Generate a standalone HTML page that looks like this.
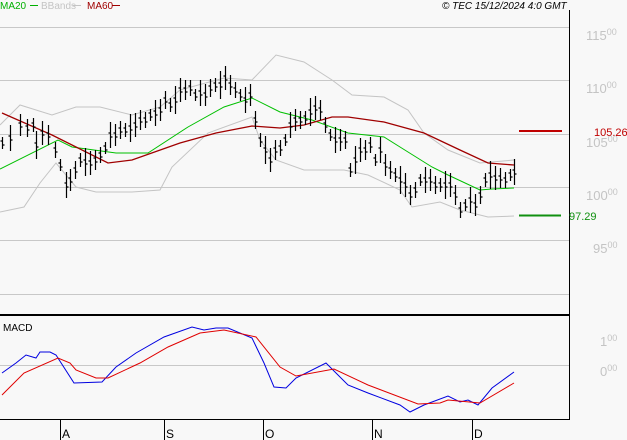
<!DOCTYPE html><html><head><style>
body{margin:0;background:#f8f8f8;width:627px;height:440px;overflow:hidden}
svg{display:block;font-family:"Liberation Sans",sans-serif}
.ax{fill:#c4c4c4;font-size:13px}
.ax tspan.s{font-size:9px}
</style></head><body>
<svg id="s" width="627" height="440" viewBox="0 0 627 440">
<rect width="627" height="440" fill="#f8f8f8"/>
<g stroke="#c8c8c8" stroke-width="1">
<line x1="0" y1="27.5" x2="569" y2="27.5"/><line x1="0" y1="80.5" x2="569" y2="80.5"/>
<line x1="0" y1="134.5" x2="569" y2="134.5"/><line x1="0" y1="187.5" x2="569" y2="187.5"/>
<line x1="0" y1="240.5" x2="569" y2="240.5"/><line x1="0" y1="294.5" x2="569" y2="294.5"/>
<line x1="0" y1="365.5" x2="569" y2="365.5"/>
</g>
<line x1="0" y1="315" x2="569" y2="315" stroke="#000" stroke-width="2"/>
<line x1="569.5" y1="10" x2="569.5" y2="420" stroke="#000"/>
<line x1="0" y1="419.5" x2="569" y2="419.5" stroke="#000"/>
<g stroke="#000"><line x1="60.5" y1="420" x2="60.5" y2="440"/><line x1="164.5" y1="420" x2="164.5" y2="440"/><line x1="263.5" y1="420" x2="263.5" y2="440"/><line x1="372.5" y1="420" x2="372.5" y2="440"/><line x1="472.5" y1="420" x2="472.5" y2="440"/></g>
<g font-size="12" fill="#000"><text x="62" y="438">A</text><text x="166" y="438">S</text><text x="265" y="438">O</text><text x="374" y="438">N</text><text x="474" y="438">D</text></g>
<g class="ax">
<text x="586" y="40">115<tspan class="s" dy="-5">00</tspan></text>
<text x="586" y="93">110<tspan class="s" dy="-5">00</tspan></text>
<text x="586" y="147">105<tspan class="s" dy="-5">00</tspan></text>
<text x="586" y="200">100<tspan class="s" dy="-5">00</tspan></text>
<text x="593" y="253">95<tspan class="s" dy="-5">00</tspan></text>
<text x="600" y="346">1<tspan class="s" dy="-5">00</tspan></text>
<text x="600" y="376">0<tspan class="s" dy="-5">00</tspan></text>
</g>
<line x1="519" y1="131" x2="562" y2="131" stroke="#c00000" stroke-width="2"/>
<text x="594" y="136" font-size="11" fill="#c00000">105.26</text>
<line x1="519" y1="215.5" x2="561" y2="215.5" stroke="#109010" stroke-width="2"/>
<text x="569" y="220" font-size="11" fill="#109010">97.29</text>
<g font-size="10">
<text x="0" y="9" fill="#00b000">MA20</text><line x1="30" y1="5.5" x2="38" y2="5.5" stroke="#00b000"/>
<text x="41" y="9" fill="#c4c4c4">BBands</text><line x1="73" y1="5.5" x2="81" y2="5.5" stroke="#c4c4c4"/>
<text x="87" y="9" fill="#a00000">MA60</text><line x1="112" y1="5.5" x2="120" y2="5.5" stroke="#a00000"/>
<text x="442" y="9" font-style="italic" fill="#000">© TEC 15/12/2024 4:0 GMT</text>
<text x="3" y="331" fill="#000">MACD</text>
</g>
<g fill="none">
<polyline stroke="#c4c4c4" points="0,125 20,105 52,115 76,107 100,107 132,115 160,107 180,90 224,78 252,80 276,55 304,62 332,80 352,95 384,97 408,110 424,133 448,150 480,163 514,160"/>
<polyline stroke="#c4c4c4" points="0,212 24,207 40,183 56,163 76,187 96,192 132,192 160,190 172,167 208,133 252,117 260,140 276,160 304,170 344,170 368,175 400,190 412,207 440,202 460,210 488,217 514,216"/>
<polyline stroke="#00c000" points="0,169 58,140 72,147 116,153 148,153 188,127 224,107 252,98 280,112 312,120 348,133 384,137 400,147 432,167 448,175 480,190 492,189 514,188"/>
<polyline stroke="#a00000" stroke-width="1.3" points="2,113 52,135 108,163 132,160 180,143 216,133 252,126 280,128 304,125 332,117 348,117 384,122 424,133 460,150 488,163 514,165"/>
<polyline stroke="#0000e0" points="2,373 16,363 26,355 36,358 40,352 50,352 56,355 74,383 102,382 116,367 136,353 164,337 192,327 204,330 216,328 228,328 252,338 264,363 274,387 286,388 296,378 326,363 348,385 368,393 400,405 410,412 424,405 448,396 460,402 468,400 478,405 492,388 514,372"/>
<polyline stroke="#e00000" points="2,395 24,373 58,358 70,363 76,370 96,378 108,378 140,363 168,347 200,333 224,330 256,337 280,367 296,376 334,369 368,385 418,404 440,403 448,400 480,403 514,383"/>
<path id="bars" stroke="#000" stroke-width="1.2" d=""/>
</g>
</svg>
<script>
var t=[[2,143],[10,138],[20,125],[27,128],[33,125],[36,145],[42,133],[48,135],[55,150],[60,165],[66,185],[70,180],[75,170],[80,160],[85,162],[90,163],[95,160],[100,155],[105,148],[110,135],[115,135],[120,130],[125,130],[130,128],[135,125],[140,120],[145,120],[150,115],[155,113],[160,110],[165,100],[170,105],[175,100],[180,90],[185,90],[190,88],[195,95],[200,93],[205,95],[210,88],[215,85],[220,85],[225,78],[230,85],[235,90],[240,95],[245,100],[250,95],[255,120],[260,140],[265,150],[270,160],[275,150],[280,148],[285,140],[290,125],[295,120],[300,120],[305,118],[310,112],[315,108],[320,110],[325,125],[330,135],[335,140],[340,140],[345,140],[350,170],[355,160],[360,150],[365,150],[370,145],[375,160],[380,150],[385,165],[390,170],[395,175],[400,180],[405,185],[410,195],[415,190],[420,180],[425,180],[430,180],[435,185],[440,185],[445,185],[450,185],[455,195],[460,210],[465,205],[470,200],[475,205],[480,195],[485,180],[490,175],[495,178],[500,178],[505,180],[510,175],[514,172]];
var d="",s=7;
for(var i=0;i<t.length;i++){var x=t[i][0]+.5,y=t[i][1],h=6+(i*7%9);d+="M"+x+" "+(y-h)+"V"+(y+h)+"M"+(x-2)+" "+(y-2)+"H"+x+"M"+x+" "+(y+2)+"H"+(x+2);}
document.getElementById("bars").setAttribute("d",d);
</script>
</body></html>
